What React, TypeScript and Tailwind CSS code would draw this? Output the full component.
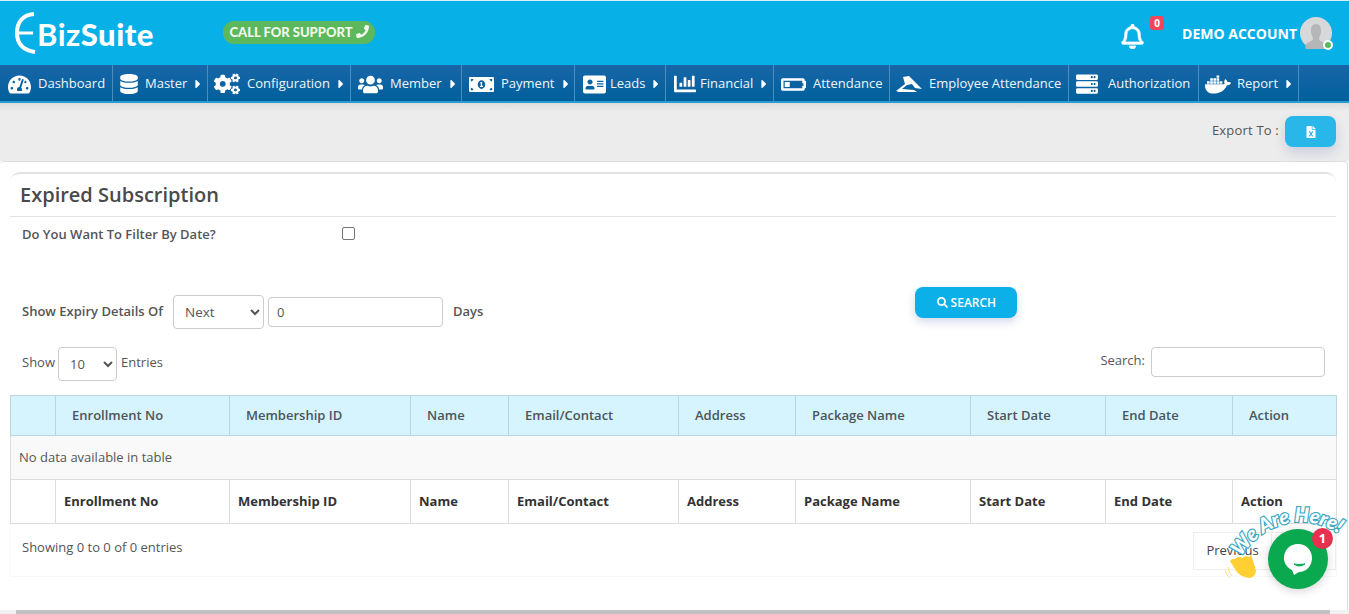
import React from "react";
import { FaTachometerAlt, FaDatabase, FaCogs, FaUsers, FaMoneyBillAlt, FaAddressCard, FaChartBar, FaBatteryQuarter, FaServer, FaDocker, FaRegBell, FaPhoneAlt, FaFileExcel, FaSearch, FaCaretRight } from "react-icons/fa";

const PlaneIcon = () => (
  <svg width="26" height="17" viewBox="0 0 26 17" fill="white">
    <path d="M0 15 L9 8 L7 1 L13 0 L26 13 L19 12 L16 8 L11 9 L6 13 L18 14 L21 16 L3 16 Z" />
  </svg>
);

const nav = [
  { w: "w-[113px]", icon: <FaTachometerAlt className="text-[23px]" />, gap: "ml-[6px]", label: "Dashboard" },
  { w: "w-[95px]", icon: <FaDatabase className="-ml-[6px] text-[20px]" />, gap: "ml-[0px]", label: "Master", caret: true },
  { w: "w-[143px]", icon: <FaCogs className="text-[26px]" />, gap: "ml-[7px]", label: "Configuration", caret: true },
  { w: "w-[111px]", icon: <FaUsers className="text-[25px]" />, gap: "ml-[7px]", label: "Member", caret: true },
  { w: "w-[113px]", icon: <FaMoneyBillAlt className="text-[25px]" />, gap: "ml-[7px]", label: "Payment", caret: true },
  { w: "w-[91px]", icon: <FaAddressCard className="text-[23px]" />, gap: "ml-[3px]", label: "Leads", caret: true },
  { w: "w-[108px]", icon: <FaChartBar className="text-[22px]" />, gap: "ml-[2px]", label: "Financial", caret: true },
  { w: "w-[116px]", icon: <FaBatteryQuarter className="text-[25px]" />, gap: "ml-[7px]", label: "Attendance" },
  { w: "w-[179px]", icon: <PlaneIcon />, gap: "ml-[7px]", label: "Employee Attendance" },
  { w: "w-[130px]", icon: <FaServer className="-ml-[3px] text-[22px]" />, gap: "ml-[7px]", label: "Authorization" },
  { w: "w-[100px]", icon: <FaDocker className="text-[27px]" />, gap: "ml-[6px]", label: "Report", caret: true },
];

const cols = ["w-[45px]", "w-[174px]", "w-[181px]", "w-[98px]", "w-[170px]", "w-[117px]", "w-[175px]", "w-[135px]", "w-[127px]", "w-[104px]"];
const names = ["", "Enrollment No", "Membership ID", "Name", "Email/Contact", "Address", "Package Name", "Start Date", "End Date", "Action"];

export default function App() {
  return (
    <div className="relative h-[614px] w-[1349px] overflow-hidden bg-white text-[13px] text-[#555] [font-family:'Open_Sans',sans-serif]">
      <header className="flex h-[65px] items-center border-t border-[#d8eef8] bg-[#08b0e8]">
        <div className="ml-[14px] flex h-[42px] w-[142px] items-center text-white">
          <svg width="24" height="42" viewBox="0 0 24 42" fill="none" stroke="white" strokeWidth="4">
            <path d="M20 2 C8 3 3 11 3 21 C3 31 8 38 21 40" />
            <path d="M3 21 L19 21" strokeWidth="3" />
          </svg>
          <span className="-ml-[1px] mt-[2px] text-[31px] leading-none tracking-[0.5px] font-bold [font-family:Lato,sans-serif]">Biz<span className="font-black">Suite</span></span>
        </div>
        <div className="ml-[67px] -mt-[2px] flex h-[23px] w-[152px] items-center justify-center gap-[3px] rounded-[11px] bg-[#5cb85c] pt-[1px] text-[13px] font-black text-[#f2f7ee] [font-family:Lato,sans-serif]">
          CALL FOR SUPPORT <FaPhoneAlt className="-mt-[2px] -scale-x-100 text-[13px]" />
        </div>
        <div className="relative ml-auto mr-[17px] flex items-center">
          <FaRegBell className="mr-[37px] mt-[6px] text-[25px] text-white" stroke="white" strokeWidth="14" />
          <span className="absolute left-[30px] -top-[1px] flex h-[14px] w-[14px] items-center justify-center rounded-[3px] bg-[#f2475a] text-[10px] font-bold text-white">0</span>
          <span className="text-[14px] font-bold text-white">DEMO ACCOUNT</span>
          <div className="relative ml-[3px] flex h-[32px] w-[32px] items-end justify-center rounded-full bg-[#d6d8da]">
            <svg width="24" height="26" viewBox="0 0 24 26" fill="#b4b6b8">
              <path d="M12 1 C8 1 7 4 7 8 C7 12 9 14 9 16 C9 18 4 19 2 21 C1 23 1 25 2 26 L22 26 C23 25 23 23 22 21 C20 19 15 18 15 16 C15 14 17 12 17 8 C17 4 16 1 12 1 Z" />
            </svg>
            <span className="absolute -bottom-[1px] -right-[1px] h-[10px] w-[10px] rounded-full border-[2px] border-white bg-[#5cb85c]" />
          </div>
        </div>
      </header>

      <nav className="flex h-[38px] items-stretch border-b-[2px] border-[#2a9bd0] bg-gradient-to-b from-[#1766a8] to-[#00609c] text-[13px] text-[#eef6fb]">
        {nav.map((n) => (
          <div key={n.label} className={`flex shrink-0 items-center border-r border-[#4c8dbd] pl-[6px] pt-[2px] ${n.w}`}>
            <span className="flex w-[26px] shrink-0 justify-center text-white">{n.icon}</span>
            <span className={`${n.gap} whitespace-nowrap`}>{n.label}</span>
            {n.caret && <FaCaretRight className="ml-[4px] text-[14px] text-white" />}
          </div>
        ))}
      </nav>

      <div className="flex h-[58px] items-start justify-end bg-[#ececec] bg-gradient-to-b from-[#dcdcdc] to-[#ececec] to-[8px] pr-[13px] pt-[13px]">
        <span className="mt-[5px] font-medium text-[13px] tracking-[0.2px] text-[#555]">Export To :</span>
        <div className="ml-[6px] flex h-[31px] w-[51px] items-center justify-center rounded-[8px] bg-[#29b6e8] text-white shadow-[0_6px_12px_rgba(60,80,160,0.18)]">
          <FaFileExcel className="text-[12px]" />
        </div>
      </div>

      <main className="mr-[1px] h-[449px] rounded-t-[4px] border-t border-r border-[#dfdfdf] pl-[10px] pr-[11px] pt-[10px]">
        <div className="h-[45px] rounded-t-[10px] border-t-[2px] border-b border-[#e2e2e2] pl-[10px] pt-[7px] text-[20px] font-semibold leading-[27px] text-[#4a4a4a]">
          Expired Subscription
        </div>
        <div className="relative flex h-[39px] pl-[12px] pt-[8px]">
          <label className="w-[319px] text-[13px] font-semibold leading-[18px]">Do You Want To Filter By Date?</label>
          <span className="ml-[1px] mt-[2px] h-[13px] w-[13px] rounded-[2px] border border-[#767676] bg-white" />
        </div>

        <div className="mt-[40px] flex h-[32px] items-center pl-[12px]">
          <span className="w-[151px] text-[13px] font-semibold">Show Expiry Details Of</span>
          <select className="h-[34px] w-[91px] rounded-[4px] border border-[#ccc] bg-white pl-[7px] text-[13.5px] text-[#555]" defaultValue="Next">
            <option>Next</option>
          </select>
          <input readOnly value="0" className="ml-[4px] h-[30px] w-[175px] rounded-[4px] border border-[#ccc] pl-[8px] text-[13px] text-[#555]" />
          <span className="ml-[10px] text-[13px] font-semibold">Days</span>
          <button className="ml-[432px] -mt-[19px] flex h-[31px] w-[102px] items-center justify-center gap-[3px] rounded-[8px] bg-[#0cb0e8] text-[12px] font-semibold text-white shadow-[0_4px_8px_rgba(60,80,160,0.22)]">
            <FaSearch className="text-[11px]" /> SEARCH
          </button>
        </div>

        <div className="mt-[19px] flex h-[34px] items-start pl-[12px]">
          <span className="mt-[6px]">Show</span>
          <select className="ml-[3px] h-[34px] w-[59px] rounded-[4px] border border-[#ccc] bg-white pl-[7px] text-[13px] text-[#555]" defaultValue="10">
            <option>10</option>
          </select>
          <span className="ml-[4px] mt-[6px]">Entries</span>
          <span className="ml-auto mt-[4px]">Search:</span>
          <input readOnly className="ml-[6px] mr-[11px] h-[30px] w-[174px] rounded-[4px] border border-[#ccc]" />
        </div>

        <table className="mt-[14px] w-[1326px] table-fixed border-collapse text-[13px]">
          <colgroup>
            {cols.map((c, i) => <col key={i} className={c} />)}
          </colgroup>
          <thead>
            <tr className="h-[40px] bg-[#d6f4fd] text-[#4b5560]">
              {names.map((n, i) => (
                <th key={i} className="border border-[#bcd6df] pl-[16px] text-left font-semibold">{n}</th>
              ))}
            </tr>
          </thead>
          <tbody>
            <tr className="h-[44px] bg-[#f9f9f9]">
              <td colSpan={10} className="border border-[#ddd] pl-[8px]">No data available in table</td>
            </tr>
          </tbody>
          <tfoot>
            <tr className="h-[44px] bg-white text-[#333]">
              {names.map((n, i) => (
                <th key={i} className="border border-[#ddd] pl-[8px] text-left font-bold">{n}</th>
              ))}
            </tr>
          </tfoot>
        </table>

        <div className="flex h-[53px] w-[1327px] items-start justify-between border-b border-l border-r border-[#f8f8f8] pl-[11px] pt-[14px]">
          <span>Showing 0 to 0 of 0 entries</span>
          <div className="-mt-[6px] flex">
            <span className="flex h-[38px] w-[79px] items-center justify-center border border-[#eee] text-[13px] text-[#444]">Previous</span>
            <span className="h-[38px] w-[64px] border border-l-0 border-[#eee]" />
          </div>
        </div>
      </main>

      <div className="absolute bottom-0 left-0 h-[4px] w-full bg-[#f1f1f1]">
        <div className="ml-[16px] h-full w-[1314px] bg-[#c1c1c1]" />
      </div>

      <div className="absolute left-[1222px] top-[505px] h-[90px] w-[127px]">
        <svg className="absolute left-0 top-0 overflow-visible" width="127" height="90" viewBox="0 0 127 90">
          <defs>
            <path id="arc" d="M19 52 C 36 24, 80 -2, 127 36" fill="none" />
          </defs>
          <text fontFamily="Lato, sans-serif" fontWeight="900" fontStyle="italic" fontSize="20" fill="white" stroke="#3ba8c2" strokeWidth="2.4" paintOrder="stroke">
            <textPath href="#arc">We Are Here!</textPath>
          </text>
          <path d="M8 56 Q10 53 13 54 Q17 50 20 53 Q24 50 27 52 L29 50 Q31 55 34 66 Q33 73 27 73 Q16 71 13 64 Z" fill="#ffcf33" />
          <path d="M6 62 Q6 67 10 71 M3 65 Q4 70 8 73" stroke="#ffe07a" strokeWidth="1" fill="none" />
        </svg>
        <div className="absolute left-[46px] top-[24px] flex h-[60px] w-[60px] items-center justify-center rounded-full bg-[#0aa84f] shadow-[0_2px_10px_rgba(0,0,0,0.18)]">
          <svg width="28" height="31" viewBox="0 0 28 31">
            <path d="M14 0 C6 0 0 6 0 14 C0 20 4 24 8 26 L10 31 L15 28 C23 28 28 21 28 14 C28 6 22 0 14 0 Z" fill="white" />
            <path d="M10 20 Q15 24 21 20 Q15 21 10 20 Z" fill="#0aa84f" stroke="#0aa84f" />
          </svg>
        </div>
        <div className="absolute left-[90px] top-[23px] flex h-[21px] w-[21px] items-center justify-center rounded-full bg-[#e8304f] text-[13px] font-bold text-white">1</div>
      </div>
    </div>
  );
}
